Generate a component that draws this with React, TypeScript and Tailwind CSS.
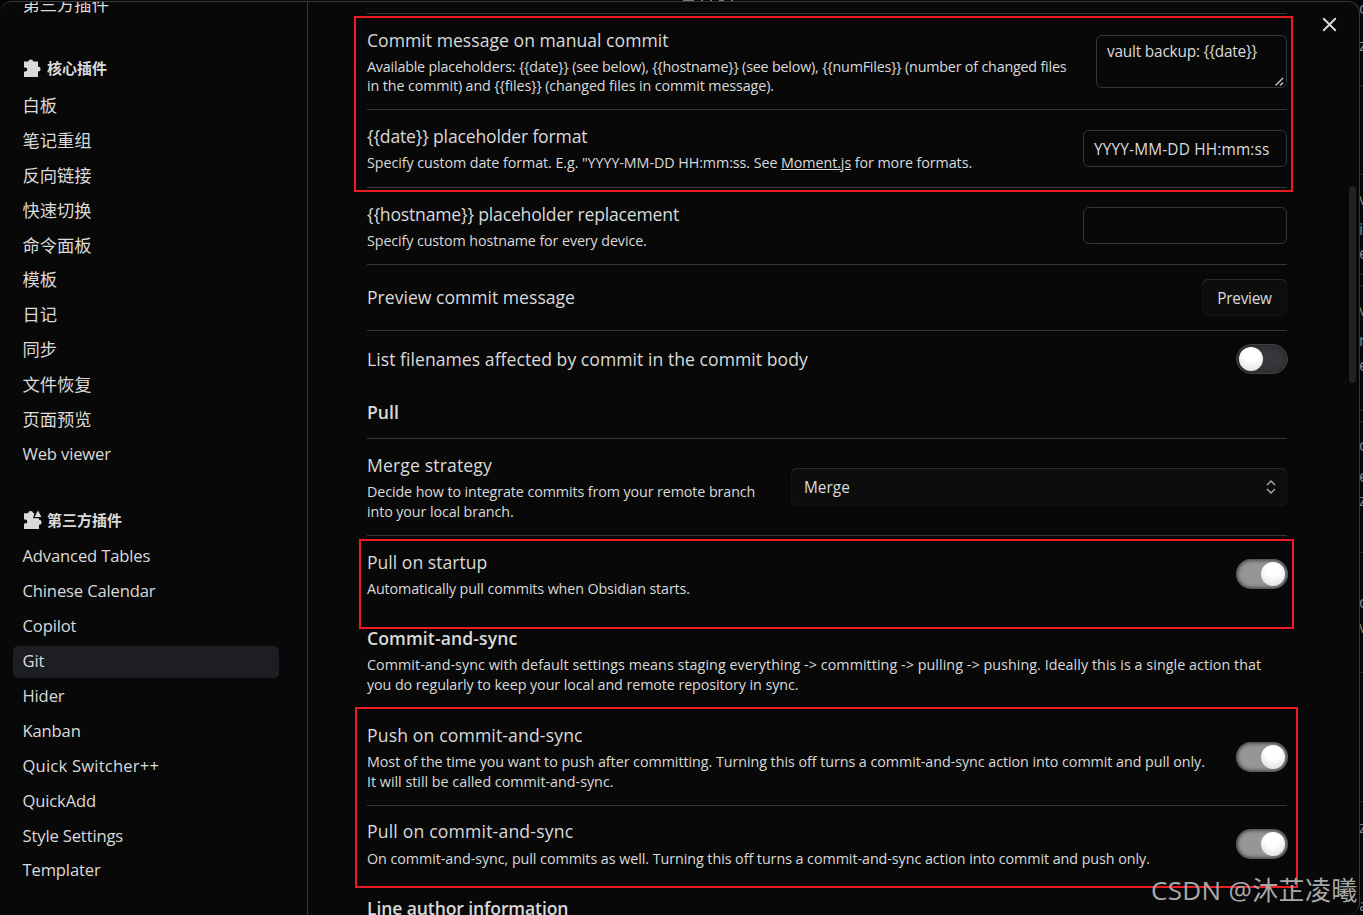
import { ReactNode } from 'react';
import { FiX } from 'react-icons/fi';

const corePlugins = [
  '白板',
  '笔记重组',
  '反向链接',
  '快速切换',
  '命令面板',
  '模板',
  '日记',
  '同步',
  '文件恢复',
  '页面预览',
  'Web viewer',
];

const communityPlugins = [
  'Advanced Tables',
  'Chinese Calendar',
  'Copilot',
  'Git',
  'Hider',
  'Kanban',
  'Quick Switcher++',
  'QuickAdd',
  'Style Settings',
  'Templater',
];

// Letters of the editor that peek out to the right of the modal
const behindText = [
  { top: -4, char: 'o' },
  { top: 33, char: 'z' },
  { top: 187, char: 'v' },
  { top: 217, char: 'i' },
  { top: 241, char: 'e' },
  { top: 298, char: 'v' },
  { top: 328, char: 'r' },
  { top: 353, char: 'e' },
  { top: 433, char: 'o' },
  { top: 464, char: 'e' },
  { top: 488, char: 'z' },
  { top: 590, char: 'o' },
  { top: 615, char: 'v' },
  { top: 815, char: 'z' },
  { top: 893, char: 'a' },
];

const behindLines = [85, 174, 274, 285, 410, 421, 552, 672, 801];

const NavItem = ({ label, active }: { label: string; active?: boolean }) => {
  const isLatin = /^[A-Z]/.test(label);

  return (
    <a
      className={`flex items-center h-8 mb-[2.9px] pl-[9.5px] rounded-[5px] whitespace-nowrap ${
        isLatin ? 'text-[16.6px]' : 'text-[17.3px]'
      } ${isLatin && !label.includes('+') ? 'tracking-[-0.15px]' : ''} ${label.includes('+') ? 'tracking-[0.2px]' : ''} ${
        active ? 'bg-[#1d1e23]' : ''
      }`}
    >
      {label}
    </a>
  );
};

const Toggle = ({ on }: { on?: boolean }) => (
  <div
    className={`flex items-center w-[52px] h-[30px] -mr-px rounded-full shrink-0 ${
      on
        ? 'justify-end px-[3px] bg-[#969696] shadow-[inset_0_0_4px_1px_rgba(0,0,0,0.7)]'
        : 'px-[2px] bg-[#37383b] border border-[#3f4042] shadow-[inset_0_0_6px_1px_rgba(0,0,0,0.35)]'
    }`}
  >
    <span className="w-6 h-6 rounded-full bg-[radial-gradient(circle_at_50%_30%,#ffffff_35%,#d8d8d8_100%)]" />
  </div>
);

interface RowProps {
  name: string;
  desc?: ReactNode;
  className: string;
  nameClass?: string;
  descClass?: string;
  children?: ReactNode;
}

const Row = ({ name, desc, className, nameClass = '', descClass = '', children }: RowProps) => (
  <div className={`flex justify-between border-[#363636] ${className}`}>
    <div className="w-0 whitespace-nowrap">
      <div className={`text-[17.6px] leading-[23px] ${nameClass}`}>{name}</div>
      {desc && <div className={`mt-[5px] text-[14.3px] leading-[19.5px] ${descClass}`}>{desc}</div>}
    </div>
    {children}
  </div>
);

const App = () => {
  return (
    <div className="relative flex w-[1363px] h-[915px] overflow-hidden bg-[#050505] text-[#dadada] font-['Open_Sans','Noto_Sans_CJK_SC',sans-serif]">
      {/* Editor behind the modal */}
      <div className="absolute right-0 top-0 w-[3px] h-full overflow-hidden text-base leading-6 text-[#858585]">
        {behindLines.map((top) => (
          <div key={top} className="absolute w-full h-px bg-[#262626]" style={{ top }} />
        ))}
        {behindText.map(({ top, char }) => (
          <span key={top} className="absolute left-[-1px]" style={{ top }}>
            {char}
          </span>
        ))}
      </div>
      <div className="absolute left-[683px] top-0 flex gap-[7px]">
        <span className="w-[11px] h-px bg-[#777777]" />
        <span className="w-[2px] h-px bg-[#777777]" />
        <span className="w-[2px] h-px bg-[#777777]" />
        <span className="w-[5px] h-px bg-[#777777]" />
        <span className="w-[2px] h-px bg-[#777777]" />
      </div>

      <div className="relative flex w-[1360px] h-[914px] mt-px overflow-hidden bg-[#080808] border-t border-r border-[#3a3a3a] rounded-t-xl rounded-br-xl">
        {/* Sidebar */}
        <aside className="w-[308px] h-full pl-[13px] pr-7 border-r border-[#363636] shrink-0">
          <div className="-mt-[13px]">
            <NavItem label="第三方插件" />
          </div>
          <h2 className="flex items-center h-8 mt-[31px] mb-[6px] pl-[10px] text-[15px] font-bold">
            <svg width="20" height="20" viewBox="0 0 20 20" className="mr-1" fill="currentColor">
              <path d="M1 3.5h4.2a2.6 2.6 0 0 1 5.1 0H15v5a2.5 2.5 0 0 1 0 5V19H1v-5.5h1.3a2 2 0 0 0 0-4H1z" />
            </svg>
            核心插件
          </h2>
          {corePlugins.map((label) => (
            <NavItem key={label} label={label} />
          ))}
          <h2 className="flex items-center h-8 mt-[33px] mb-[5px] pl-[10px] text-[15px] font-bold">
            <svg width="20" height="20" viewBox="0 0 20 20" className="mr-1" fill="currentColor">
              <path d="M1 3.2h4a2.7 2.7 0 0 1 5.3 0h1.2L10 8.3h6v1.5a2.5 2.5 0 0 1 0 5V19H1v-5.5h1.3a2 2 0 0 0 0-4H1z" />
              <path d="M15 0.5l3.4 6.5h-6.8z" />
            </svg>
            第三方插件
          </h2>
          {communityPlugins.map((label) => (
            <NavItem key={label} label={label} active={label === 'Git'} />
          ))}
        </aside>

        {/* Settings */}
        <main className="w-[920px] ml-[59px] pt-[11px] shrink-0">
          <Row
            name="Commit message on manual commit"
            className="h-[97px] pt-[15px] border-y"
            nameClass="tracking-[0.02px]"
            descClass="leading-[19px] tracking-[-0.11px]"
            desc={
              <>
                <span className="tracking-[-0.19px]">
                  {'Available placeholders: {{date}} (see below), {{hostname}} (see below), {{numFiles}} (number of changed files'}
                </span>
                <br />
                {'in the commit) and {{files}} (changed files in commit message).'}
              </>
            }
          >
            <div className="relative w-[191px] h-[53px] mt-[6px] px-[10px] py-1 border border-[#363636] rounded-[6px] text-[15.4px] leading-6 tracking-[-0.2px]">
              {'vault backup: {{date}}'}
              <svg width="9" height="9" viewBox="0 0 9 9" className="absolute right-[2px] bottom-[1px]" stroke="#c8c8c8" strokeWidth="1.4">
                <path d="M0.5 8.5l7.5-7.5M5 8.5l3-3" />
              </svg>
            </div>
          </Row>
          <Row
            name="{{date}} placeholder format"
            className="h-[78px] pt-[15px] border-b"
            nameClass="tracking-[-0.18px]"
            descClass="tracking-[-0.07px]"
            desc={
              <>
                Specify custom date format. E.g. "YYYY-MM-DD HH:mm:ss. See <a className="underline">Moment.js</a> for more formats.
              </>
            }
          >
            <div className="flex items-center w-[204px] h-[37px] mt-[5px] px-[10px] pt-[2px] border border-[#363636] rounded-[6px] text-[15.4px] tracking-[0.17px] whitespace-nowrap">
              YYYY-MM-DD HH:mm:ss
            </div>
          </Row>
          <Row
            name="{{hostname}} placeholder replacement"
            className="h-[77px] pt-[15px] border-b"
            nameClass="tracking-[-0.19px]"
            descClass="tracking-[-0.1px]"
            desc="Specify custom hostname for every device."
          >
            <div className="w-[204px] h-[37px] mt-1 border border-[#363636] rounded-[6px]" />
          </Row>
          <Row name="Preview commit message" className="h-[66px] items-center border-b">
            <button className="w-[85px] h-[37px] pt-[2px] rounded-[6px] bg-[#0d0d0d] text-[15.4px] tracking-[-0.25px] shadow-[inset_0_1px_0_#2c2c2c,inset_0_0_0_1px_#141414]">
              Preview
            </button>
          </Row>
          <Row
            name="List filenames affected by commit in the commit body"
            className="h-[57px] pt-[17px]"
            nameClass="tracking-[0.04px]"
          >
            <div className="-mt-1">
              <Toggle />
            </div>
          </Row>
          <h3 className="h-[51px] pt-[13px] border-b border-[#363636] text-[17.6px] leading-[23px] font-semibold">Pull</h3>
          <Row
            name="Merge strategy"
            className="h-[97px] pt-[15px] border-b"
            nameClass="tracking-[0.14px]"
            descClass="tracking-[-0.1px]"
            desc={
              <>
                Decide how to integrate commits from your remote branch
                <br />
                into your local branch.
              </>
            }
          >
            <div className="flex items-center justify-between w-[496px] h-[38px] mt-[14px] pl-[13px] pr-[11px] rounded-[6px] bg-[#0d0d0d] text-[15.4px] shadow-[inset_0_1px_0_#2c2c2c,inset_0_0_0_1px_#141414]">
              <span className="pt-[2px]">Merge</span>
              <svg width="10" height="14" viewBox="0 0 10 14" fill="none" stroke="#aaaaaa" strokeWidth="1.4">
                <path d="M1 5l4-4 4 4M1 9l4 4 4-4" />
              </svg>
            </div>
          </Row>
          <Row
            name="Pull on startup"
            className="h-[88px] pt-[15px]"
            descClass="tracking-[-0.12px]"
            desc="Automatically pull commits when Obsidian starts."
          >
            <div className="mt-2">
              <Toggle on />
            </div>
          </Row>
          <h3 className="h-[31px] pt-[3px] text-[17.6px] leading-[23px] font-semibold tracking-[0.1px]">Commit-and-sync</h3>
          <p className="h-[54px] text-[14.3px] leading-[19.5px] tracking-[-0.08px] whitespace-nowrap">
            <span className="tracking-[0.06px]">
              {'Commit-and-sync with default settings means staging everything -> committing -> pulling -> pushing. Ideally this is a single action that'}
            </span>
            <br />
            you do regularly to keep your local and remote repository in sync.
          </p>
          <Row
            name="Push on commit-and-sync"
            className="h-[97px] pt-[15px] border-b"
            nameClass="tracking-[0.14px]"
            descClass="leading-[19.2px]"
            desc={
              <>
                <span className="tracking-[-0.047px]">
                  Most of the time you want to push after committing. Turning this off turns a commit-and-sync action into commit and pull only.
                </span>
                <br />
                It will still be called commit-and-sync.
              </>
            }
          >
            <div className="mt-[18px]">
              <Toggle on />
            </div>
          </Row>
          <Row
            name="Pull on commit-and-sync"
            className="h-[87px] pt-[14px]"
            nameClass="tracking-[0.18px]"
            descClass="pt-px tracking-[-0.05px]"
            desc="On commit-and-sync, pull commits as well. Turning this off turns a commit-and-sync action into commit and push only."
          >
            <div className="mt-[9px]">
              <Toggle on />
            </div>
          </Row>
          <h3 className="pt-1 text-[17.6px] leading-[23px] font-semibold tracking-[-0.13px]">Line author information</h3>
        </main>
      </div>

      <FiX className="absolute left-[1318px] top-[13px] w-[23px] h-[23px]" />
      <div className="absolute left-[1349px] top-[186px] w-[7px] h-[197px] rounded-full bg-[#222222]" />

      {/* Highlight boxes */}
      <div className="absolute left-[354px] top-[16px] w-[939px] h-[176px] border-2 border-[#ed1c24]" />
      <div className="absolute left-[359px] top-[539px] w-[935px] h-[90px] border-2 border-[#ed1c24]" />
      <div className="absolute left-[355px] top-[707px] w-[943px] h-[181px] border-2 border-[#ed1c24]" />

      <div className="absolute left-[1151px] top-[872px] text-[26px] leading-9 tracking-[0.35px] text-[#a8a8a8] whitespace-nowrap">
        CSDN @沐芷凌曦
      </div>
    </div>
  );
};

export default App;
